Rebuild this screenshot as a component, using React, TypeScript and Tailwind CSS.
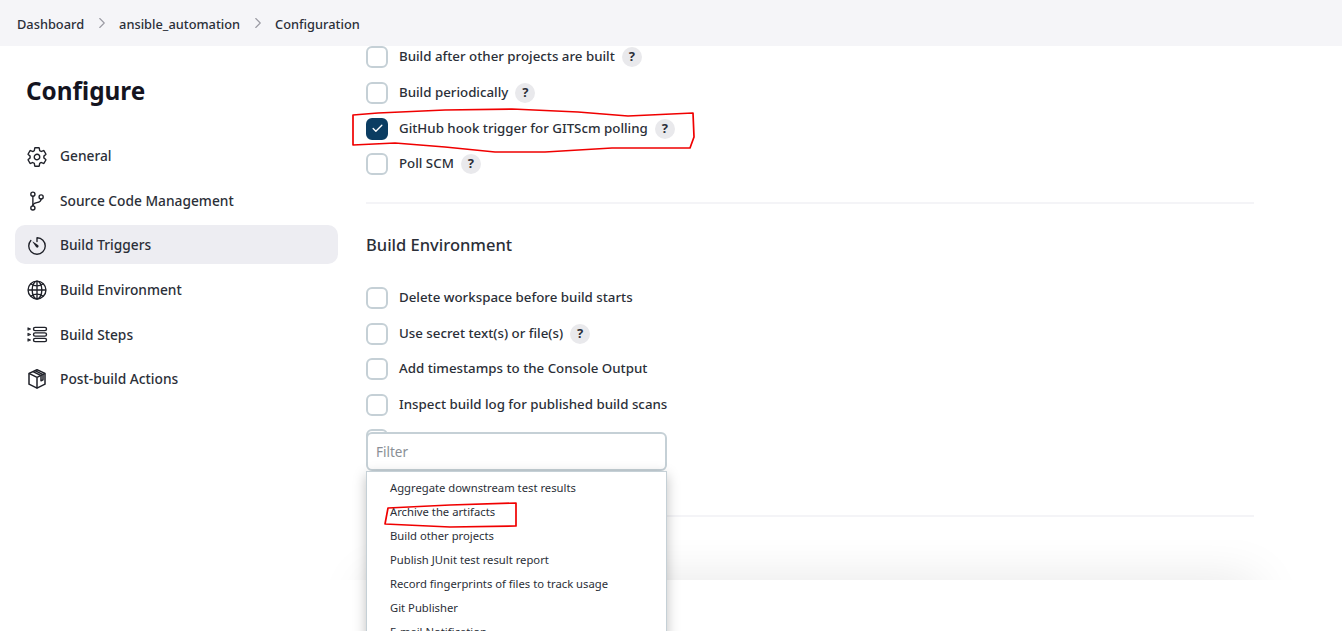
import { IoSettingsOutline, IoGitBranchOutline, IoTimerOutline, IoGlobeOutline } from "react-icons/io5"
import { Check, ChevronRight } from "lucide-react"
import type { ReactNode } from "react"

function StepsIcon() {
  return (
    <svg viewBox="0 0 22 22" className="h-[22px] w-[22px]" fill="none" stroke="currentColor" strokeWidth="1.4">
      <rect x="7.5" y="3.4" width="13" height="3.2" rx="1.6" />
      <rect x="7.5" y="8.9" width="13" height="3.2" rx="1.6" />
      <rect x="7.5" y="14.4" width="13" height="3.2" rx="1.6" />
      <path d="M2 3.9l2.4 1.1L2 6.1zM2 9.4l2.4 1.1L2 11.6zM2 14.9l2.4 1.1L2 17.1z" strokeWidth="1.1" strokeLinejoin="round" />
    </svg>
  )
}

function PackageIcon() {
  return (
    <svg viewBox="0 0 22 22" className="h-[22px] w-[22px]" fill="none" stroke="currentColor" strokeWidth="1.5" strokeLinejoin="round">
      <path d="M11 1.8l8 3.6v10.8l-8 4-8-4V5.4z" />
      <path d="M3 5.4l8 4 8-4M11 9.4v10.8" />
      <path d="M7 3.6l8 4v5.2l2-1V6.6L9 2.7" />
    </svg>
  )
}

const navItems: { label: string; icon: ReactNode; active?: boolean }[] = [
  { label: "General", icon: <IoSettingsOutline size={22} /> },
  { label: "Source Code Management", icon: <IoGitBranchOutline size={22} /> },
  { label: "Build Triggers", icon: <IoTimerOutline size={22} />, active: true },
  { label: "Build Environment", icon: <IoGlobeOutline size={22} /> },
  { label: "Build Steps", icon: <StepsIcon /> },
  { label: "Post-build Actions", icon: <PackageIcon /> },
]

const menuItems = [
  "Aggregate downstream test results",
  "Archive the artifacts",
  "Build other projects",
  "Publish JUnit test result report",
  "Record fingerprints of files to track usage",
  "Git Publisher",
  "E-mail Notification",
]

function CheckRow({ label, help, checked }: { label: string; help?: boolean; checked?: boolean }) {
  return (
    <div className="flex h-[22px] items-center">
      <span
        className={`flex h-[22px] w-[22px] shrink-0 items-center justify-center rounded-[6px] border-2 ${
          checked ? "border-[#0b3d62] bg-[#0b3d62]" : "border-[#c5d0d6] bg-white"
        }`}
      >
        {checked && <Check size={13} strokeWidth={2.5} className="text-white" />}
      </span>
      <span className="ml-[11px] text-[13.3px] font-medium text-[#2b2f38]">{label}</span>
      {help && (
        <span className="ml-[7px] flex h-5 w-5 items-center justify-center rounded-full bg-[#e9e9ec] text-[13px] font-bold text-[#2b2f38]">
          ?
        </span>
      )}
    </div>
  )
}

export default function App() {
  return (
    <div className="relative h-[631px] w-[1342px] overflow-hidden bg-white font-['Noto_Sans',sans-serif] text-[#14141f]">
      {/* Breadcrumb */}
      <header className="relative z-10 flex h-[46px] items-center bg-[#f5f5f8] pl-[17px] pt-1 text-[12.8px] font-medium text-[#2b2f38]">
        <span>Dashboard</span>
        <ChevronRight size={18} strokeWidth={1.5} className="mx-[8.5px] -mt-1 text-[#9a9aa3]" />
        <span>ansible_automation</span>
        <ChevronRight size={18} strokeWidth={1.5} className="mx-[8.5px] -mt-1 text-[#9a9aa3]" />
        <span>Configuration</span>
      </header>

      <div className="flex">
        {/* Side nav */}
        <aside className="ml-[15px] w-[323px] shrink-0">
          <h1 className="ml-[11px] mt-[27px] text-[24.3px] font-bold leading-[36px]">Configure</h1>
          <nav className="mt-[28px] flex flex-col gap-[5.6px]">
            {navItems.map((item) => (
              <div
                key={item.label}
                className={`flex h-[39px] items-center rounded-[10px] pl-[11px] ${
                  item.active ? "-mt-px mb-px bg-[#ededf2] pt-0.5" : ""
                }`}
              >
                <span className="flex w-[34px] shrink-0 text-[#1f2129]">{item.icon}</span>
                <span className="text-[13.75px] font-medium text-[#2b2f38]">{item.label}</span>
              </div>
            ))}
          </nav>
        </aside>

        {/* Main form */}
        <main className="relative ml-[28px] w-[888px] shrink-0">
          <div className="-mt-[0.5px] flex flex-col gap-[14px]">
            <CheckRow label="Build after other projects are built" help />
            <CheckRow label="Build periodically" help />
            <CheckRow label="GitHub hook trigger for GITScm polling" help checked />
            <div className="-mt-[0.5px]">
              <CheckRow label="Poll SCM" help />
            </div>
          </div>
          <div className="mt-[27px] h-0.5 bg-[#f4f4f7]" />
          <h2 className="mt-[29px] text-[16.5px] font-medium leading-[24px] text-[#2b2f38]">Build Environment</h2>
          <div className="mt-[30.1px] flex flex-col gap-[13.5px]">
            <CheckRow label="Delete workspace before build starts" />
            <CheckRow label="Use secret text(s) or file(s)" help />
            <CheckRow label="Add timestamps to the Console Output" />
            <CheckRow label="Inspect build log for published build scans" />
            <CheckRow label="" />
          </div>
          <div className="mt-[64px] h-0.5 bg-[#f4f4f7]" />
        </main>
      </div>

      {/* Shadow of the sticky footer, cut off at its top edge */}
      <div className="absolute left-[320px] top-[540px] h-[40px] w-[980px] overflow-hidden">
        <div className="ml-[46px] mt-[40px] h-[50px] w-[890px] shadow-[0_0_50px_rgba(0,0,0,0.1)]" />
      </div>

      {/* Add post-build dropdown */}
      <div className="absolute left-[366px] top-[432px] z-20 w-[301px]">
        <div className="flex h-[39px] items-center rounded-[6px] border-2 border-[#c5d0d6] bg-white pl-2 pt-0.5 text-[13.5px] text-[#8a8f96]">
          Filter
        </div>
        <ul className="h-[170px] overflow-hidden border border-[#c5d0d6] bg-white pl-[23px] pt-1 text-[11.25px] leading-[24px] text-[#2b2f38] shadow-[0_4px_12px_rgba(0,0,0,0.25)]">
          {menuItems.map((item) => (
            <li key={item}>{item}</li>
          ))}
        </ul>
      </div>

      {/* Red marker annotations */}
      <svg className="pointer-events-none absolute left-0 top-0 z-30" width="1342" height="631" fill="none" stroke="#f00000" strokeWidth="1.7" strokeLinejoin="round">
        <polygon points="353,115 378,113 445,110 512,109 578,112 628,116 693,113 694,137 690,148 612,148 545,152 495,152 445,147 395,143 353,145" />
        <polygon points="388,508 450,505 516,503 516,526 450,527 385,524" />
      </svg>
    </div>
  )
}
